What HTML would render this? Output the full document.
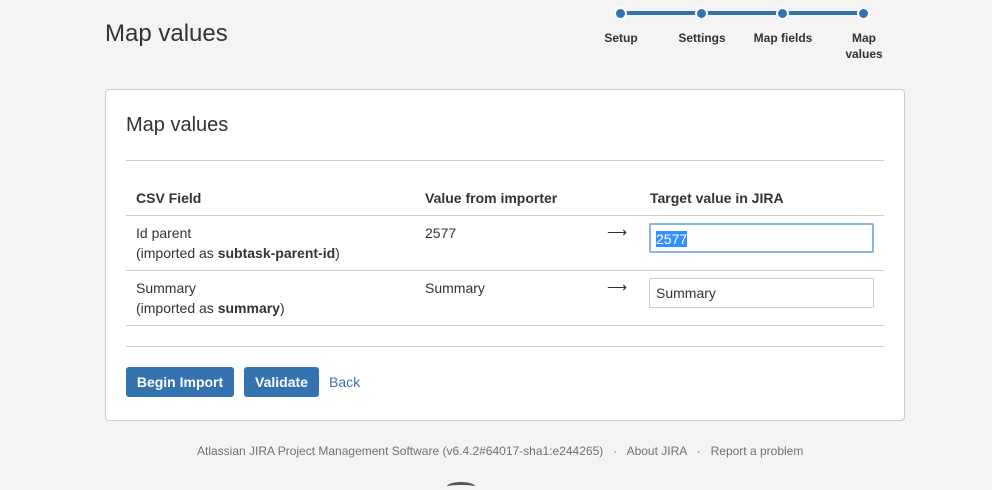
<!DOCTYPE html>
<html style="height:490px;overflow:hidden"><head><style>
body{margin:0;width:992px;height:490px;background:#f4f4f4;font-family:"Liberation Sans",Arial,sans-serif;color:#333;position:relative;overflow:hidden}
.a{position:absolute}
h1{position:absolute;left:105px;top:20px;margin:0;font-weight:normal;font-size:24px;color:#333}
.dot{position:absolute;width:9px;height:9px;border-radius:50%;background:#3572b0;border:2px solid #fff;top:7px}
.lbl{position:absolute;font-size:12px;font-weight:bold;width:80px;text-align:center;line-height:16px}
.panel{position:absolute;left:105px;top:89px;width:798px;height:330px;background:#fff;border:1px solid #ccc;border-radius:4px}
.hr{position:absolute;height:1px;background:#ccc}
.t{position:absolute;font-size:14px;line-height:20px}
.btn{position:absolute;top:367px;height:30px;background:#3572b0;color:#fff;font-weight:bold;font-size:14px;line-height:30px;text-align:center;border-radius:3px}
.inp{position:absolute;left:649px;width:225px;height:28px;border:1px solid #ccc;border-radius:2px;font-size:14px;line-height:28px;box-sizing:border-box}
</style></head><body>
<h1>Map values</h1>
<div class="a" style="left:621px;top:11px;width:243px;height:4px;background:#3572b0"></div>
<div class="dot" style="left:614px"></div>
<div class="dot" style="left:695px"></div>
<div class="dot" style="left:776px"></div>
<div class="dot" style="left:857px"></div>
<div class="lbl" style="left:581px;top:30px">Setup</div>
<div class="lbl" style="left:662px;top:30px">Settings</div>
<div class="lbl" style="left:743px;top:30px">Map fields</div>
<div class="lbl" style="left:824px;top:30px">Map<br>values</div>
<div class="panel"></div>
<div class="a" style="left:126px;top:114px;font-size:20px">Map values</div>
<div class="hr" style="left:126px;top:160px;width:758px"></div>
<div class="t" style="left:136px;top:188px;font-weight:bold">CSV Field</div>
<div class="t" style="left:425px;top:188px;font-weight:bold">Value from importer</div>
<div class="t" style="left:650px;top:188px;font-weight:bold">Target value in JIRA</div>
<div class="hr" style="left:126px;top:215px;width:758px"></div>
<div class="t" style="left:136px;top:223px">Id parent<br>(imported as <b>subtask-parent-id</b>)</div>
<div class="t" style="left:425px;top:223px">2577</div>
<div class="t" style="left:607px;top:222px">⟶</div>
<div class="inp" style="top:223px;height:30px;border:2px solid #8cb4e3;padding-left:5px"><span style="background:#3390ff;color:#fff">2577</span></div>
<div class="hr" style="left:126px;top:270px;width:758px"></div>
<div class="t" style="left:136px;top:278px">Summary<br>(imported as <b>summary</b>)</div>
<div class="t" style="left:425px;top:278px">Summary</div>
<div class="t" style="left:607px;top:277px">⟶</div>
<div class="inp" style="top:278px;height:30px;padding-left:6px">Summary</div>
<div class="hr" style="left:126px;top:325px;width:758px"></div>
<div class="hr" style="left:126px;top:346px;width:758px"></div>
<div class="btn" style="left:126px;width:108px">Begin Import</div>
<div class="btn" style="left:244px;width:75px">Validate</div>
<div class="t" style="left:329px;top:372px;color:#3b73af">Back</div>
<div class="a" style="left:197px;top:444px;font-size:12px;color:#707070;white-space:nowrap">Atlassian JIRA Project Management Software (v6.4.2#64017-sha1:e244265) &nbsp; · &nbsp; About JIRA &nbsp; · &nbsp; Report a problem</div>
<div class="a" style="left:447px;top:482px;width:28px;height:6px;border-top:3px solid #555;border-radius:50% 50% 0 0"></div>
</body></html>
